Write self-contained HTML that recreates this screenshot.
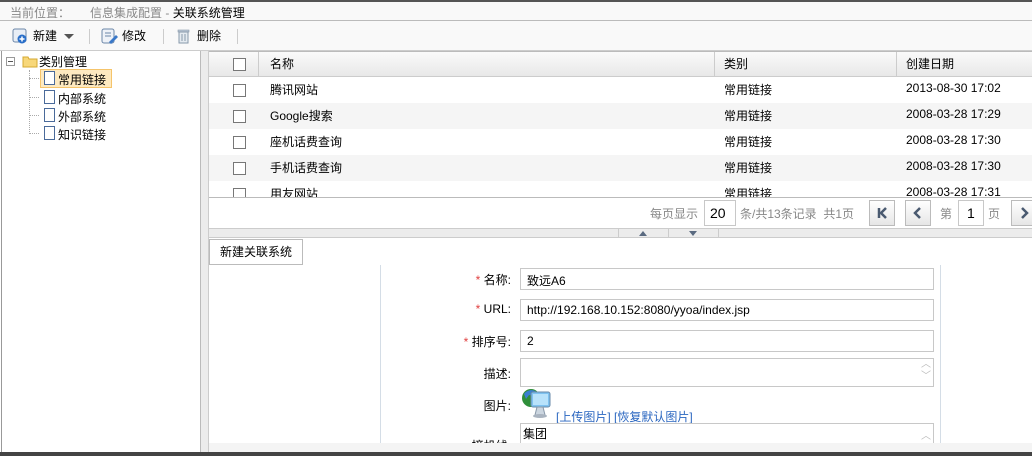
<!DOCTYPE html>
<html><head><meta charset="utf-8"><style>
*{margin:0;padding:0;box-sizing:border-box}
body{width:1032px;height:456px;overflow:hidden;background:#fff;font:12px "Liberation Sans","Noto Sans CJK SC",sans-serif;color:#000;position:relative}
.a{position:absolute}
.cb{position:absolute;left:24px;width:13px;height:13px;border:1px solid #777;background:#fff}
.row{position:absolute;left:0;right:0;height:26px}
.row span{position:absolute;top:4px}
.inp{position:absolute;border:1px solid #c8c8c8;background:#fff;height:22px;padding:3px 6px}
.lbl{position:absolute;text-align:right;width:120px}
.star{color:#e04040}
.pb{position:absolute;top:200px;width:26px;height:26px;border:1px solid #bbb;background:linear-gradient(#fff,#e6e6e6)}
</style></head><body>
<div class="a" style="left:0;top:0;width:1032px;height:2px;background:#555"></div>
<div class="a" style="left:0;top:2px;width:1032px;height:19px;background:#f9f9f9;border-bottom:1px solid #bbb"></div>
<div class="a" style="left:10px;top:4px;color:#888">当前位置：&nbsp;&nbsp;&nbsp;&nbsp;&nbsp;&nbsp;信息集成配置 <span style="color:#888">-</span> <span style="color:#000">关联系统管理</span></div>
<div class="a" style="left:0;top:21px;width:1032px;height:30px;background:#f9f9f9;border-bottom:1px solid #ccc"></div>
<svg class="a" style="left:12px;top:28px" width="16" height="16"><rect x="1" y="1" width="13" height="13" rx="2" fill="#e8eef6" stroke="#6b86a8"/><circle cx="10" cy="11" r="4.5" fill="#2a6fc9"/><path d="M10 8.5v5M7.5 11h5" stroke="#fff" stroke-width="1.5"/></svg>
<div class="a" style="left:33px;top:27px">新建</div>
<div class="a" style="left:64px;top:34px;width:0;height:0;border-left:5px solid transparent;border-right:5px solid transparent;border-top:5px solid #555"></div>
<div class="a" style="left:89px;top:29px;width:1px;height:15px;background:#ccc"></div>
<svg class="a" style="left:101px;top:28px" width="18" height="16"><rect x="1" y="1" width="12" height="14" rx="2" fill="#eef2f8" stroke="#6b86a8"/><path d="M4 5h6M4 8h6" stroke="#6b86a8"/><path d="M8 14l7-7 2 2-7 7z" fill="#3a78c8"/></svg>
<div class="a" style="left:122px;top:27px">修改</div>
<div class="a" style="left:163px;top:29px;width:1px;height:15px;background:#ccc"></div>
<svg class="a" style="left:176px;top:28px" width="16" height="16"><rect x="2" y="2" width="11" height="2" fill="#bcc8d6" stroke="#8899aa" stroke-width=".6"/><rect x="3" y="4" width="9" height="11" fill="#e4eaf0" stroke="#8899aa"/><path d="M6 6v7M9 6v7" stroke="#8899aa"/></svg>
<div class="a" style="left:197px;top:27px">删除</div>
<div class="a" style="left:237px;top:29px;width:1px;height:15px;background:#ccc"></div>
<!-- left tree -->
<div class="a" style="left:1px;top:51px;width:200px;height:401px;border-left:1px solid #999;border-right:1px solid #bbb"></div>
<div class="a" style="left:201px;top:51px;width:8px;height:401px;background:#ececec;border-right:1px solid #ccc"></div>
<div class="a" style="left:6px;top:57px;width:9px;height:9px;border:1px solid #999;background:#fff"></div>
<div class="a" style="left:8px;top:61px;width:5px;height:1px;background:#555"></div>
<svg class="a" style="left:22px;top:54px" width="16" height="14"><path d="M1 3h5l1 2h8v8H1z" fill="#f7d77a" stroke="#d6a830"/></svg>
<div class="a" style="left:39px;top:53px">类别管理</div>
<div class="a" style="left:29px;top:70px;width:1px;height:64px;border-left:1px dotted #aaa"></div>
<div class="a" style="left:29px;top:78px;width:10px;border-top:1px dotted #aaa"></div>
<div class="a" style="left:29px;top:97px;width:10px;border-top:1px dotted #aaa"></div>
<div class="a" style="left:29px;top:115px;width:10px;border-top:1px dotted #aaa"></div>
<div class="a" style="left:29px;top:133px;width:10px;border-top:1px dotted #aaa"></div>
<div class="a" style="left:40px;top:69px;width:72px;height:19px;background:#fde9c0;border:1px solid #f5c46b"></div>
<div class="a" style="left:44px;top:71px;width:11px;height:14px;border:1px solid #4a6a9a;background:#fff"></div>
<div class="a" style="left:58px;top:71px">常用链接</div>
<div class="a" style="left:44px;top:90px;width:11px;height:14px;border:1px solid #4a6a9a;background:#fff"></div>
<div class="a" style="left:58px;top:90px">内部系统</div>
<div class="a" style="left:44px;top:108px;width:11px;height:14px;border:1px solid #4a6a9a;background:#fff"></div>
<div class="a" style="left:58px;top:108px">外部系统</div>
<div class="a" style="left:44px;top:126px;width:11px;height:14px;border:1px solid #4a6a9a;background:#fff"></div>
<div class="a" style="left:58px;top:126px">知识链接</div>
<!-- grid -->
<div class="a" style="left:209px;top:51px;width:823px;height:146px;overflow:hidden">
 <div class="row" style="top:0;height:26px;background:linear-gradient(#fafafa,#e8e8e8);border-top:1px solid #bbb;border-bottom:1px solid #ccc">
  <div class="cb" style="top:6px"></div>
  <div class="a" style="left:49px;top:0;width:1px;height:25px;background:#ccc"></div>
  <span style="left:61px;top:3px">名称</span>
  <div class="a" style="left:505px;top:0;width:1px;height:25px;background:#ccc"></div>
  <span style="left:515px;top:3px">类别</span>
  <div class="a" style="left:687px;top:0;width:1px;height:25px;background:#ccc"></div>
  <span style="left:697px;top:3px">创建日期</span>
 </div>
 <div class="row" style="top:26px"><div class="cb" style="top:7px"></div><span style="left:61px">腾讯网站</span><span style="left:515px">常用链接</span><span style="left:697px">2013-08-30 17:02</span></div>
 <div class="row" style="top:52px;background:#f5f5f5"><div class="cb" style="top:7px"></div><span style="left:61px">Google搜索</span><span style="left:515px">常用链接</span><span style="left:697px">2008-03-28 17:29</span></div>
 <div class="row" style="top:78px"><div class="cb" style="top:7px"></div><span style="left:61px">座机话费查询</span><span style="left:515px">常用链接</span><span style="left:697px">2008-03-28 17:30</span></div>
 <div class="row" style="top:104px;background:#f5f5f5"><div class="cb" style="top:7px"></div><span style="left:61px">手机话费查询</span><span style="left:515px">常用链接</span><span style="left:697px">2008-03-28 17:30</span></div>
 <div class="row" style="top:130px"><div class="cb" style="top:7px"></div><span style="left:61px">用友网站</span><span style="left:515px">常用链接</span><span style="left:697px">2008-03-28 17:31</span></div>
</div>
<div class="a" style="left:209px;top:197px;width:823px;height:1px;background:#bbb"></div>
<div class="a" style="left:650px;top:205px;color:#888">每页显示</div>
<div class="inp" style="left:704px;top:200px;width:32px;height:26px;font-size:14px;padding:4px 5px">20</div>
<div class="a" style="left:740px;top:205px;color:#888">条/共13条记录&nbsp;&nbsp;共1页</div>
<div class="pb" style="left:869px"><svg width="24" height="24"><path d="M9 7v10" stroke="#4a5a70" stroke-width="2.5"/><path d="M16 7l-5 5 5 5" fill="none" stroke="#4a5a70" stroke-width="2.5"/></svg></div>
<div class="pb" style="left:905px"><svg width="24" height="24"><path d="M14 7l-5 5 5 5" fill="none" stroke="#4a5a70" stroke-width="2.5"/></svg></div>
<div class="a" style="left:940px;top:205px;color:#888">第</div>
<div class="inp" style="left:958px;top:200px;width:26px;height:26px;font-size:14px;padding:4px 8px">1</div>
<div class="a" style="left:988px;top:205px;color:#888">页</div>
<div class="pb" style="left:1011px"><svg width="24" height="24"><path d="M10 7l5 5-5 5" fill="none" stroke="#4a5a70" stroke-width="2.5"/></svg></div>
<!-- splitter -->
<div class="a" style="left:209px;top:228px;width:823px;height:10px;background:#ececec;border-top:1px solid #ccc;border-bottom:1px solid #ccc"></div>
<div class="a" style="left:618px;top:229px;width:1px;height:8px;background:#ccc"></div>
<div class="a" style="left:668px;top:229px;width:1px;height:8px;background:#ccc"></div>
<div class="a" style="left:718px;top:229px;width:1px;height:8px;background:#ccc"></div>
<div class="a" style="left:639px;top:231px;border-left:4px solid transparent;border-right:4px solid transparent;border-bottom:5px solid #5a6a80"></div>
<div class="a" style="left:689px;top:231px;border-left:4px solid transparent;border-right:4px solid transparent;border-top:5px solid #5a6a80"></div>
<!-- form -->
<div class="a" style="left:209px;top:239px;width:823px;height:204px;overflow:hidden">
<div class="a" style="left:0;top:0;width:94px;height:26px;border:1px solid #bbb;background:#fff;text-align:center;line-height:24px">新建关联系统</div>
<div class="a" style="left:171px;top:26px;width:1px;height:185px;background:#d4dde6"></div>
<div class="a" style="left:731px;top:26px;width:1px;height:185px;background:#d4dde6"></div>
<div class="lbl" style="left:182px;top:32px"><span class="star">* </span>名称:</div>
<div class="inp" style="left:311px;top:29px;width:414px">致远A6</div>
<div class="lbl" style="left:182px;top:63px"><span class="star">* </span>URL:</div>
<div class="inp" style="left:311px;top:60px;width:414px">http://192.168.10.152:8080/yyoa/index.jsp</div>
<div class="lbl" style="left:182px;top:94px"><span class="star">* </span>排序号:</div>
<div class="inp" style="left:311px;top:91px;width:414px">2</div>
<div class="lbl" style="left:182px;top:126px">描述:</div>
<div class="inp" style="left:311px;top:119px;width:414px;height:29px"></div>
<div class="a" style="left:712px;top:120px;color:#bbb;font-size:10px;line-height:12px">︿<br>﹀</div>
<div class="lbl" style="left:182px;top:158px">图片:</div>
<svg class="a" style="left:312px;top:148px" width="32" height="33"><circle cx="10" cy="11" r="9" fill="#2f8f3a"/><path d="M3 7a9 9 0 0 1 14 -1l-4 3-5-1-3 4z" fill="#3a7fd0"/><rect x="10" y="5" width="19" height="15" rx="2" fill="#7fc2f0" stroke="#6a8aa8"/><rect x="12" y="7" width="15" height="11" fill="#b8e2fb"/><path d="M16 20h6l2 8h-10z" fill="#ccd6e0" stroke="#8898a8"/><ellipse cx="19" cy="29" rx="7" ry="2" fill="#aab4c0"/></svg>
<div class="a" style="left:347px;top:169px;color:#2a66c0">[上传图片] [恢复默认图片]</div>
<div class="lbl" style="left:182px;top:198px">摘机线:</div>
<div class="inp" style="left:311px;top:184px;width:414px;height:40px;padding:1px 2px">集团</div>
<div class="a" style="left:712px;top:188px;color:#bbb;font-size:10px">︿</div>
</div>
<div class="a" style="left:209px;top:443px;width:823px;height:9px;background:#f4f4f4"></div>
<div class="a" style="left:0;top:452px;width:1032px;height:4px;background:#444"></div>
</body></html>
